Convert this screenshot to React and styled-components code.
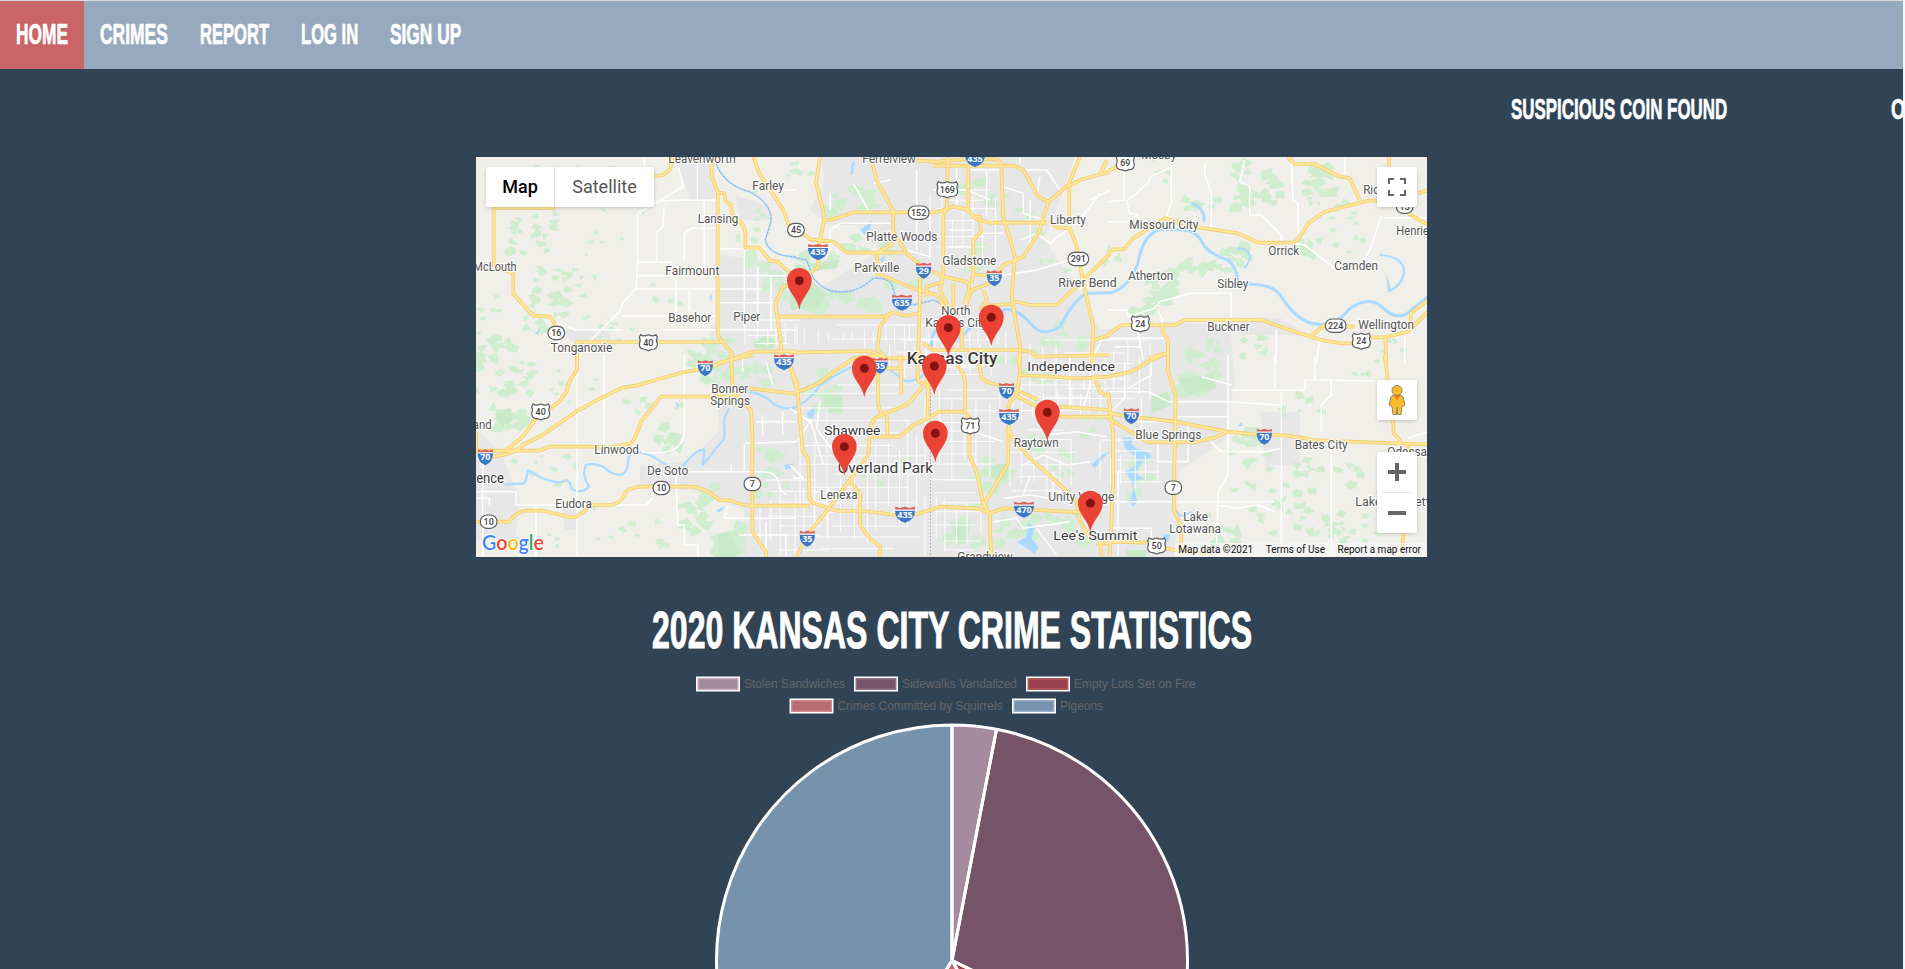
import React, { useLayoutEffect, useRef, useState } from "react";
import styled, { createGlobalStyle } from "styled-components";

const GlobalStyle = createGlobalStyle`
  * { box-sizing: border-box; }
  html, body { margin: 0; padding: 0; height: 969px; overflow: hidden; background: #f4f6f8; }
`;

const Page = styled.div`
  width: 1903px;
  height: 969px;
  overflow: hidden;
  background: #314455;
  border-top: 1px solid #d6d9dd;
  display: flex;
  flex-direction: column;
  align-items: center;
  font-family: "Liberation Sans", Arial, sans-serif;
`;

const Nav = styled.nav`
  width: 100%;
  height: 68px;
  flex: none;
  display: flex;
  background: #97a9be;
`;

const NavLink = styled.a`
  height: 68px;
  padding: 0 16px 3px;
  display: flex;
  align-items: center;
  background: ${(p) => (p.$active ? "#c96567" : "transparent")};
`;

const FitBox = styled.span`
  display: block;
  width: ${(p) => p.$width}px;
  height: ${(p) => p.$size}px;
  flex: none;
  color: #fff;
  font-weight: 700;
  font-size: ${(p) => p.$size}px;
  line-height: ${(p) => p.$size}px;
  white-space: nowrap;
  -webkit-text-stroke: ${(p) => p.$stroke}px #fff;
`;

const FitInner = styled.span`
  display: inline-block;
  transform-origin: 0 50%;
`;

const Ticker = styled.div`
  width: 100%;
  height: 87px;
  flex: none;
  display: flex;
  gap: 164px;
  padding: 25px 0 0 1511px;
  overflow: hidden;
`;

const MapFrame = styled.section`
  position: relative;
  width: 951px;
  height: 400px;
  flex: none;
  margin-top: 1px;
  overflow: hidden;
  background: #f0efea;
  font-family: Roboto, Arial, sans-serif;
`;

const MapSvg = styled.svg`
  display: block;
  width: 951px;
  height: 400px;
`;

const Control = styled.div`
  position: absolute;
  display: flex;
  align-items: center;
  justify-content: center;
  background: #fff;
  border-radius: 2px;
  box-shadow: 0 1px 4px -1px rgba(0, 0, 0, 0.3);
`;

const TypeControl = styled(Control)`
  left: 10px;
  top: 10px;
  width: 168px;
  height: 40px;
`;

const TypeButton = styled.div`
  width: ${(p) => p.$width}px;
  height: 40px;
  text-align: center;
  line-height: 39px;
  font-size: 18px;
  font-weight: ${(p) => (p.$active ? 500 : 400)};
  color: ${(p) => (p.$active ? "#000" : "#565656")};
  border-left: ${(p) => (p.$active ? "none" : "1px solid #e6e6e6")};
`;

const SideControl = styled(Control)`
  left: 901px;
  top: ${(p) => p.$top}px;
  width: 40px;
  height: ${(p) => p.$height}px;
`;

const Attribution = styled.div`
  position: absolute;
  right: 0;
  bottom: 0;
  height: 14px;
  display: flex;
  gap: 12.6px;
  padding: 0 6px 0 3px;
  background: rgba(245, 245, 245, 0.75);
  font-size: 10px;
  line-height: 14px;
  color: #111;
  white-space: nowrap;
`;

const Title = styled.h1`
  margin: 48px 0 0;
  height: 50px;
  flex: none;
`;

const Chart = styled.svg`
  display: block;
  width: 520px;
  height: 304px;
  flex: none;
  margin-top: 13px;
`;

function FitText({ width, size, stroke = 0.7, children }) {
  const ref = useRef(null);
  const [scale, setScale] = useState(0.6);
  useLayoutEffect(() => {
    setScale(width / ref.current.offsetWidth);
  }, [width, children]);
  return (
    <FitBox $width={width} $size={size} $stroke={stroke}>
      <FitInner ref={ref} style={{ transform: `scaleX(${scale})` }}>{children}</FitInner>
    </FitBox>
  );
}

const navItems = [
  ["HOME", 52],
  ["CRIMES", 68],
  ["REPORT", 69],
  ["LOG IN", 57],
  ["SIGN UP", 71],
];

/* Map data: six tiles, drawn in units of a third of a pixel. */
const tiles = [
  {
    x: 476, y: 150,
    green: [[170, 250, 70, 60, 22, 18], [340, 90, 180, 50, 14, 12], [270, 400, 90, 50, 18, 18], [230, 480, 100, 60, 20, 20], [50, 600, 60, 40, 10, 26], [420, 230, 110, 90, 10, 12], [420, 560, 60, 50, 8, 14], [700, 610, 60, 40, 14, 22], [830, 210, 70, 90, 10, 14], [560, 430, 60, 30, 5, 14], [850, 340, 50, 30, 6, 28], [20, 440, 50, 110, 8, 14], [905, 390, 40, 60, 5, 26]],
    park: ["M830 580Q840 560 875 558Q905 570 898 590Q870 602 840 595Z"],
    lake: ["M163 535L180 548L196 530L185 556Z", "M700 440L708 432L706 456Z"],
    river: ["M720 40Q745 105 820 125Q890 160 885 215L868 270Q880 320 960 320"],
    minor: "M664 21V150M534 155Q560 150 720 150M485 190V335L480 415L440 460L430 485L345 570M485 190L622 110L600 21M565 170L560 230L543 245V335M481 337H590M481 377H930M480 417H860M440 498H720M725 296H870M685 150V370M625 335V250L645 235H720M805 300V540M845 350V540M600 380V500M885 380V540M730 458H900M640 420V500M240 520L300 540H440M560 540H960M505 21V50M920 120H960",
    road: "M243 174H53V345L112 372V432L172 497L220 500Q236 510 240 545V570M303 630V576H747M725 130V540Q724 560 740 575L768 610V640M707 21V80L726 128L745 130L748 152L764 165L768 190L803 228L808 250V293H850L882 332L905 335L945 372M535 78L560 76L582 60L590 21M832 21L850 70L922 180L942 235M960 395L920 412L898 460L905 510L918 610L915 640M905 500H960M700 652L830 605L960 604",
    labels: [["Leavenworth", 577, 779, 39], ["Farley", 829, 924, 121], ["Lansing", 665, 787, 218], ["McLouth", -8, 122, 364], ["Fairmount", 568, 730, 376], ["Basehor", 577, 706, 517], ["Piper", 772, 853, 514], ["Tonganoxie", 224, 409, 607]],
    oval: [["16", 241, 549]], us: [["40", 517, 577]], inter: [], pins: [],
  },
  {
    x: 790, y: 150,
    green: [[190, 150, 70, 40, 10, 30], [240, 290, 70, 30, 8, 24], [90, 330, 60, 30, 8, 28], [180, 460, 130, 30, 14, 32], [30, 60, 40, 50, 7, 14], [530, 110, 50, 20, 5, 26], [640, 190, 50, 60, 7, 22], [570, 330, 40, 40, 5, 22], [850, 560, 70, 40, 8, 24], [790, 330, 60, 60, 5, 14], [730, 260, 20, 60, 4, 28], [330, 400, 50, 20, 4, 24], [750, 590, 40, 20, 4, 20]],
    park: ["M50 340L150 330L140 355L80 362Z", "M0 390L50 380L110 430L90 470L0 480Z"],
    lake: ["M212 240L230 225L246 210L240 235L222 255Z", "M185 40L195 30L190 70L180 74Z", "M268 330L285 318L280 336Z"],
    river: ["M0 320L50 330L70 385Q110 430 150 425Q200 430 250 385Q305 380 310 420Q315 455 370 465L430 450L470 470"],
    wide: ["M425 590Q420 550 450 530M500 575Q550 520 600 490L650 478Q690 480 730 530Q760 560 810 530Q850 450 890 430L960 428"],
    minor: "M120 300V240L150 220H300M380 60V300M420 180V320L350 300M500 50V170M590 60V200M430 120H530L600 150M540 60H630M640 110L700 130V190L760 210M750 80L740 140M690 270L740 250L780 280L830 240M610 380L740 360L840 330M690 40V20M480 240H550M475 290H550M120 130V180M190 100L240 190M300 90L250 100M720 150V300M810 120L770 60H700M930 130L870 210M960 120L900 150M940 560L910 620M640 250H580",
    road: "M90 21L78 100L100 185L103 210L85 290M103 212Q130 210 190 187H440L490 170L530 178L560 208L600 218H770M20 235L60 268L130 275L170 308H340M380 32L440 35L520 28H620Q635 32 634 60L640 200L675 320L665 440L690 590V640M430 47H670L700 60L745 140L775 155M247 40L260 90L310 185V245L350 310L390 345L460 380L530 395Q545 410 530 440L520 480M473 21V60L470 170L460 200V370L450 420L480 480M535 50V190M540 200H570L573 245L550 270V370L545 400M870 21L835 105L775 155L745 250L700 320L640 345L600 400L545 420L530 460L525 480M960 65L870 90L835 110M950 30L930 75M838 110V210M780 215L800 232L840 235L860 290L880 400L910 530L905 640M960 310L880 390L800 465H720L680 455L665 462L590 467M310 280L260 310L262 370L370 415L440 435L465 475M0 500H280L310 487L350 498L385 490M300 490L270 530L262 600L290 625M390 380V440L385 600L400 625M0 608L240 603L290 625H400M400 580L430 600H690L720 605L740 620L960 615M910 570L960 555M85 290V350L60 368M410 440V410L460 395M490 400V470M580 420L590 450L570 480M515 530V600M550 375H610",
    labels: [["Ferrelview", 217, 378, 38], ["Platte Woods", 229, 442, 272], ["Parkville", 193, 328, 367], ["Gladstone", 457, 619, 344], ["Liberty", 780, 888, 223], ["North", 454, 541, 496], ["Kansas City", 406, 592, 532], ["River Bend", 805, 980, 412], ["Kansas City", 350, 622, 641, 48, 500]],
    oval: [["152", 386, 188], ["45", 18, 240], ["291", 865, 327]], us: [["169", 472, 118]],
    inter: [["435", 84, 304], ["29", 401, 360], ["35", 613, 383], ["635", 336, 456], ["435", 555, 25]],
    pins: [[28, 392], [475, 533], [604, 502]],
  },
  {
    x: 1108, y: 150,
    green: [[450, 110, 70, 70, 20, 28], [620, 90, 50, 50, 12, 28], [660, 150, 60, 40, 8, 20], [380, 320, 40, 30, 12, 26], [270, 350, 90, 25, 14, 24], [160, 430, 50, 50, 14, 30], [270, 160, 60, 20, 10, 20], [100, 500, 50, 30, 6, 22], [610, 290, 40, 30, 6, 24], [730, 240, 60, 70, 9, 14], [320, 600, 50, 30, 8, 16], [450, 590, 50, 30, 6, 18], [170, 60, 40, 50, 5, 14], [840, 590, 60, 20, 5, 14], [20, 320, 40, 20, 4, 26], [390, 80, 20, 50, 5, 20]],
    park: [], lake: ["M835 370L845 405L850 425L840 422Z"],
    river: [],
    wide: ["M0 430Q60 420 90 340Q105 250 160 238L230 240Q270 245 290 290Q320 320 360 330Q385 350 390 395L430 403Q500 405 520 440Q570 520 630 523Q690 525 720 480Q780 435 820 470Q870 520 910 480L960 440", "M250 160Q290 170 288 215"],
    thin: ["M400 295Q445 310 410 355M390 298L400 294", "M815 315Q890 320 888 370Q880 410 840 425"],
    minor: "M48 60V150L0 155M55 150L65 190L90 195L60 215L0 215M60 150L120 100L130 80L190 50V160L175 200M290 40V70L310 130V240M410 30L395 95L425 110V195H460L520 255V275M550 30L555 150L570 160V250M560 280L590 285L680 355M820 200L785 300L770 330M830 203H960M710 21V90M0 480H55L60 500L140 475L155 455L250 430H370V515M505 540V640M640 540L625 640M890 560V640M150 480L165 515M0 565H170M90 540L105 630M20 590H100",
    road: "M0 310L15 298H48L75 265L170 205L270 232L390 250L450 278H555Q570 275 600 220L650 185L780 152H810M540 21L560 42H620L690 78L725 85L755 150M843 21V55M900 190L960 225M930 130L960 120M0 62L45 45M0 555L40 525H200L230 510H460L560 545L640 570L700 580H740M740 530H700L650 525L610 557M790 562H830L900 545L960 485M908 520V490L960 450M832 560L835 640M162 520L165 545L180 570V640M180 608L120 625",
    labels: [["Mosby", 100, 205, 28], ["Missouri City", 64, 271, 238], ["Orrick", 481, 574, 316], ["Camden", 679, 810, 361], ["Atherton", 61, 196, 391], ["Sibley", 328, 421, 415], ["Buckner", 298, 425, 544], ["Wellington", 751, 918, 538], ["Richmond", 766, 920, 133], ["Henrietta", 865, 1003, 256]],
    oval: [["224", 683, 527], ["13", 890, 170]], us: [["69", 52, 38], ["24", 97, 521], ["24", 760, 573]], inter: [], pins: [],
  },
  {
    x: 476, y: 355,
    green: [[80, 60, 90, 60, 22, 22], [90, 190, 60, 40, 8, 26], [320, 100, 120, 60, 8, 12], [200, 340, 110, 50, 9, 16], [540, 250, 70, 40, 12, 24], [520, 160, 100, 30, 6, 18], [650, 470, 40, 60, 14, 26], [760, 540, 40, 50, 12, 32], [420, 500, 70, 60, 8, 14], [560, 530, 30, 50, 5, 18], [880, 320, 50, 40, 8, 30], [740, 60, 60, 50, 10, 28], [860, 60, 60, 30, 6, 26], [200, 560, 80, 30, 5, 12], [870, 400, 60, 20, 5, 24], [690, 420, 30, 30, 5, 22]],
    park: ["M60 165L105 160L110 200L80 212L58 195Z", "M725 535L760 530L790 590L780 605H730Z"],
    lake: ["M598 140L604 160L610 150Z", "M925 330L955 325L945 340L930 345Z", "M720 468L740 455L745 460L728 472Z"],
    river: [],
    thin: ["M85 388L145 385Q155 360 155 345L200 370Q250 390 270 375Q285 380 285 400Q310 420 340 395Q315 360 330 330Q370 320 400 350Q450 375 455 330Q455 300 470 290Q520 290 570 330", "M620 335Q660 280 685 285L680 330Q720 280 745 250L745 190L760 160", "M820 110Q870 120 890 145Q920 165 960 160"],
    minor: "M303 45V605M20 320V605M0 410H120V450H510L530 430M384 0V280M180 450V605M495 290Q620 310 625 230V50M640 350H860Q910 350 910 400L930 420M600 360L605 510H625V570H665V605M0 430H40V450M860 180V240M920 170V240M805 265L960 260M805 270V345M745 490H960M745 490L755 455M790 540H930V605M870 500V590M765 325V350M960 200H840M625 0V50M870 20L890 90M800 50V0",
    road: "M0 287H90L140 245L180 190L250 140L272 110Q275 80 303 45V0M20 305H50Q110 300 140 270L200 240L300 170Q370 130 440 98L480 92L620 52L680 42L740 20L830 0M90 287H190L220 275H350L400 277L465 265Q480 250 495 200L555 125H790M0 500H100Q120 470 150 467H200L290 488Q320 480 340 450H410Q440 440 450 410Q470 393 510 395H650Q690 400 730 435L765 437Q800 452 830 452H960M765 0L770 110L825 165L829 230V530L870 590V605M820 100L960 117M940 20L960 100M0 230V290",
    labels: [["Bonner", 706, 817, 115], ["Springs", 703, 822, 150], ["Linwood", 355, 489, 298], ["De Soto", 513, 637, 361], ["Eudora", 238, 348, 460], ["Lawrence", -84, 84, 385, 42], ["Midland", -75, 47, 223]],
    oval: [["10", 556, 399], ["10", 38, 500], ["7", 829, 387]], us: [["40", 194, 170]],
    inter: [["70", 688, 38], ["435", 924, 20], ["70", 28, 305]], pins: [],
  },
  {
    x: 790, y: 355,
    green: [[130, 140, 50, 35, 8, 30], [610, 340, 50, 30, 8, 30], [790, 310, 60, 60, 9, 20], [740, 60, 50, 25, 5, 26], [520, 540, 50, 40, 9, 28], [680, 540, 60, 50, 9, 30], [830, 520, 60, 50, 8, 28], [280, 360, 80, 60, 5, 18], [580, 420, 40, 40, 5, 28], [90, 90, 70, 40, 6, 24], [720, 250, 60, 40, 6, 22], [620, 20, 60, 20, 5, 26], [900, 220, 50, 30, 4, 22]],
    park: ["M100 130L155 120L160 170L110 175Z", "M600 330L660 325L650 375L605 370Z", "M480 500L540 505L530 570L500 560Z"],
    lake: ["M50 175L75 155L72 180L60 200Z", "M715 505L735 515L725 550L745 575L735 598L705 575L680 562L708 545Z", "M905 330L935 300L958 290L930 320L915 340Z", "M30 578L50 575L40 595Z"],
    river: [],
    thin: ["M0 160Q50 150 90 90Q150 50 200 30M260 30Q300 40 345 78Q385 80 410 50"],
    minor: "M90 140L80 220L130 290M0 160L60 200L20 260M60 190L100 330M700 330L760 300L830 330L900 320M640 430L720 420L840 440M610 500L680 490L700 520L840 500M740 520L800 600M900 90L880 160M770 240L860 230L950 245M720 360L700 420M790 350V440M840 0V150M550 230L640 260M900 0V100M0 330L40 370H10",
    road: "M0 115Q80 100 130 50L190 10L270 0M0 30L20 80L38 290L55 310L58 430Q70 450 90 450L140 468H220L320 480L390 475L450 455L560 460L600 475L640 460L870 472M0 452H60M20 605L60 530L120 455L235 300L240 220Q245 190 275 180L350 150Q370 130 405 85L430 60M262 20L265 150L275 180M290 180L292 240M235 245H330L370 210L415 190L445 170H520M185 365V385L210 415V510L240 550L270 575V605M500 30Q530 60 525 100V170L538 190V300L560 350L578 440L600 480V530L605 605M578 455L655 325V215M655 160L660 140L680 120L690 50L685 0M565 20L575 70L590 80L680 105L745 135M665 115L740 155L820 185H960M810 155L960 165M685 60L870 70L960 65M655 210L665 245L720 310L800 380L860 440L870 500L900 550M910 60L930 110L960 130M415 80L412 190M330 0L335 120M380 0L385 80L410 90M920 565H960M930 560L935 605M290 40H340",
    labels: [["Independence", 712, 975, 48, 40], ["Shawnee", 103, 271, 239, 40], ["Overland Park", 143, 429, 354, 43], ["Raytown", 671, 806, 277], ["Lenexa", 91, 203, 433], ["Unity Village", 775, 973, 439], ["Lee's Summit", 790, 1042, 555, 40], ["Grandview", 502, 668, 618]],
    oval: [], us: [["71", 541, 212]],
    inter: [["35", 270, 30], ["70", 650, 106], ["435", 657, 184], ["435", 345, 477], ["35", 52, 549], ["470", 702, 462]],
    pins: [[223, 40], [433, 33], [163, 275], [436, 235], [772, 172], [901, 445]],
  },
  {
    x: 1108, y: 355,
    green: [[270, 90, 50, 30, 10, 34], [90, 380, 40, 70, 10, 30], [580, 150, 60, 30, 7, 20], [450, 350, 90, 60, 12, 18], [600, 360, 40, 50, 8, 20], [520, 470, 100, 70, 16, 20], [350, 520, 50, 40, 9, 24], [730, 350, 50, 40, 6, 20], [740, 510, 90, 50, 14, 18], [410, 250, 50, 20, 6, 28], [300, 20, 40, 20, 6, 18], [660, 540, 60, 40, 6, 16], [790, 40, 60, 20, 5, 14], [240, 10, 40, 30, 4, 24]],
    park: ["M130 125L180 110L190 150L130 175Z", "M210 70L315 60L325 100L240 120Z", "M55 585H115V605H55Z"],
    lake: ["M45 245L75 250L70 268L85 280L125 295L130 308L105 318L80 355L112 372L84 375L76 395L88 440L75 455L66 440L75 400L68 375L52 350L78 335L88 310L50 278Z", "M200 460L220 480L260 465L240 480L215 486Z", "M165 540L188 535L180 560L170 560Z", "M388 215L400 200L404 212Z"],
    river: [],
    minor: "M360 0V360L330 410L325 600M500 0V105H590V75H670V120L640 150V230M370 105H500M520 110V605M280 65L370 90M0 110H120L180 140H360L515 150M210 185H360M670 290V605M325 450L390 460L450 450L500 470M0 440H500M310 262L340 290H470L520 280M240 320H150V250M130 0V60L60 100M620 0V75M660 75L800 78M900 250L960 230M0 520H130V600M50 20V130L0 180M100 130V220M90 200H200M30 350V600M240 200V320",
    road: "M0 65L70 50L130 15L165 0M180 0V50L190 80L203 120L197 460L220 520V605M0 175L70 185L200 200L360 230L440 238L540 242L620 255L720 260L960 268M0 190L60 225L120 262H260L320 248L360 230M0 110L15 230V400L5 605M830 0L840 80M855 190L857 235L875 255V270M887 530L880 605M0 560L120 563L170 580L220 588H250M900 270V290M250 590L320 605",
    labels: [["Blue Springs", 82, 280, 253], ["Bates City", 560, 719, 283], ["Lake", 226, 300, 499], ["Lotawana", 184, 339, 534], ["Odessa", 838, 957, 303], ["Lake Lafayette", 742, 985, 454]],
    oval: [["7", 196, 398]], us: [["50", 146, 572]],
    inter: [["70", 70, 182], ["70", 469, 243]], pins: [],
  },
];

function makeRandom(seed) {
  let s = seed;
  return () => {
    s = (s * 16807) % 2147483647;
    return s / 2147483647;
  };
}

function scatter(clusters, seed) {
  const rnd = makeRandom(seed);
  let d = "";
  clusters.forEach(([cx, cy, rx, ry, n, size]) => {
    for (let i = 0; i < n; i += 1) {
      const x = cx + (rnd() * 2 - 1) * rx;
      const y = cy + (rnd() * 2 - 1) * ry;
      const corners = 3 + Math.floor(rnd() * 3);
      const turn = rnd() * 6.28;
      for (let k = 0; k < corners; k += 1) {
        const a = turn + (k / corners) * 6.28;
        const r = size * (0.4 + rnd() * 0.75);
        d += `${k ? "L" : "M"}${(x + Math.cos(a) * r).toFixed(1)} ${(y + Math.sin(a) * r * 0.75).toFixed(1)}`;
      }
      d += "Z";
    }
  });
  return d;
}

function streets() {
  const rnd = makeRandom(77);
  const zones = [[795, 325, 1010, 345], [800, 385, 925, 555], [925, 365, 1000, 480], [1000, 385, 1110, 420], [865, 325, 1010, 380], [1030, 340, 1160, 400], [925, 480, 990, 555], [745, 320, 800, 350], [1010, 430, 1080, 500], [1100, 440, 1165, 490], [930, 190, 1000, 270], [760, 480, 830, 555]];
  let d = "";
  zones.forEach(([x0, y0, x1, y1]) => {
    for (let x = x0; x < x1; x += 8 + rnd() * 7) {
      const a = y0 + rnd() * (y1 - y0) * 0.4;
      d += `M${x.toFixed(1)} ${a.toFixed(1)}V${(y1 - rnd() * (y1 - y0) * 0.3).toFixed(1)}`;
    }
    for (let y = y0; y < y1; y += 8 + rnd() * 8) {
      const a = x0 + rnd() * (x1 - x0) * 0.3;
      d += `M${a.toFixed(1)} ${y.toFixed(1)}H${(x1 - rnd() * (x1 - x0) * 0.3).toFixed(1)}`;
    }
  });
  return d;
}

const urban = "M820 157H1075L1060 200L1045 240L1085 300L1100 330L1165 322L1230 325L1235 380L1225 440L1180 470L1175 557H735L745 510L690 490L670 480L720 430L715 380L705 350L715 320L718 255L780 262L800 300L880 250L855 225L830 225L810 210L825 180ZM676 157H715V200H690ZM735 195L770 207V220H740ZM560 330H610V350H580ZM476 430L500 450L520 500L515 540H476ZM560 500H578V530H565ZM640 465L700 460L690 490L640 488ZM1220 317L1280 318L1310 335H1240ZM1260 412H1300V465H1265ZM1285 415H1300V430H1285Z";

function Layer({ render }) {
  return tiles.map((t, i) => (
    <g key={i} transform={`translate(${t.x} ${t.y}) scale(0.33333)`}>{render(t, i)}</g>
  ));
}

function Oval({ data: [n, x, y] }) {
  const w = n.length > 2 ? 62 : 50;
  return (
    <g>
      <rect x={x - w / 2} y={y - 20} width={w} height="40" rx="20" fill="#fff" stroke="#5b5d60" strokeWidth="3.5" />
      <text x={x} y={y + 9} textAnchor="middle" fontSize="27" fontWeight="500" fill="#444">{n}</text>
    </g>
  );
}

function UsShield({ data: [n, x, y] }) {
  const w = n.length > 2 ? 31 : 27;
  return (
    <g>
      <path
        transform={`translate(${x} ${y})`}
        d={`M${-w + 4} -23Q${-w / 2} -16 0 -23Q${w / 2} -16 ${w - 4} -23L${w} -15Q${w - 5} -6 ${w} 4Q${w} 18 ${w - 10} 20Q8 20 0 25Q-8 20 ${-w + 10} 20Q${-w} 18 ${-w} 4Q${-w + 5} -6 ${-w} -15Z`}
        fill="#fff" stroke="#5b5d60" strokeWidth="3.5"
      />
      <text x={x} y={y + 10} textAnchor="middle" fontSize="27" fontWeight="500" fill="#444">{n}</text>
    </g>
  );
}

function Interstate({ data: [n, x, y] }) {
  const w = n.length > 2 ? 30 : 23;
  return (
    <g>
      <g transform={`translate(${x} ${y})`}>
        <path d={`M${-w} -10H${w}Q${w} 17 0 26Q${-w} 17 ${-w} -10Z`} fill="#3a77c8" />
        <path d={`M${-w + 1} -22L${-w / 2} -18L0 -22L${w / 2} -18L${w - 1} -22L${w} -13H${-w}Z`} fill="#d8605d" />
        <path d={`M${-w} -12H${w}`} stroke="#fff" strokeWidth="2" />
      </g>
      <text x={x} y={y + 11} textAnchor="middle" fontFamily="'Open Sans', 'Noto Sans', sans-serif" fontSize="27" fontWeight="700" fill="#fff">{n}</text>
    </g>
  );
}

function CityMap() {
  return (
    <MapSvg viewBox="476 157 951 400">
      <rect x="476" y="157" width="951" height="400" fill="#f0efea" />
      <path d={urban} fill="#e7e7e7" />
      <Layer render={(t, i) => (
        <>
          <path d={scatter(t.green, 91 + i * 53)} fill="#d0edd0" />
          <path d={t.park.join("")} fill="#c8eac8" />
          <path d={t.lake.join("")} fill="#aadaff" />
          <path d={(t.wide || []).join("")} fill="none" stroke="#aadaff" strokeWidth="9" strokeLinejoin="round" />
          <path d={(t.thin || []).join("")} fill="none" stroke="#aadaff" strokeWidth="6.5" strokeLinejoin="round" />
          <path d={t.river.join("")} fill="none" stroke="#aadaff" strokeWidth="5" strokeLinejoin="round" />
          <path d={t.river.join("")} fill="none" stroke="#86a9c8" strokeWidth="2.5" strokeDasharray="7 4" />
        </>
      )} />
      <path d={streets()} fill="none" stroke="#fff" strokeWidth="0.9" />
      <path d="M930.5 382V557" stroke="#aaa" strokeWidth="1" strokeDasharray="1.5 2" />
      <Layer render={(t) => <path d={t.minor} fill="none" stroke="#fff" strokeWidth="4.5" strokeLinejoin="round" />} />
      <Layer render={(t) => <path d={t.road} fill="none" stroke="#f6ce6c" strokeWidth="11" strokeLinejoin="round" />} />
      <Layer render={(t) => <path d={t.road} fill="none" stroke="#ffe698" strokeWidth="6" strokeLinejoin="round" />} />
      <Layer render={(t) => (
        <>
          {t.labels.map(([s, a, b, y, size = 36, weight = 400], k) => (
            <text
              key={k} x={a} y={y} textLength={b - a} lengthAdjust="spacingAndGlyphs"
              fontSize={size} fontWeight={weight} fill={size > 36 ? "#3a3a3a" : "#555"}
              stroke="#fff" strokeWidth="7" strokeLinejoin="round" strokeOpacity="0.85" paintOrder="stroke"
            >{s}</text>
          ))}
          {t.oval.map((s, k) => <Oval key={k} data={s} />)}
          {t.us.map((s, k) => <UsShield key={k} data={s} />)}
          {t.inter.map((s, k) => <Interstate key={k} data={s} />)}
        </>
      )} />
      <Layer render={(t) => t.pins.map(([x, y], k) => (
        <g key={k} transform={`translate(${x} ${y})`}>
          <path d="M0 87C-6 48 -37 34 -37 -1A37 37 0 0 1 37 -1C37 34 6 48 0 87Z" fill="#ea4335" />
          <circle r="13.5" fill="#811411" />
        </g>
      ))} />
      <text x="482" y="550" textLength="62" lengthAdjust="spacingAndGlyphs" fontFamily="Lato, sans-serif" fontSize="21" fontWeight="600" stroke="#fff" strokeWidth="2" paintOrder="stroke">
        <tspan fill="#4285f4">G</tspan><tspan fill="#ea4335">o</tspan><tspan fill="#fbbc05">o</tspan><tspan fill="#4285f4">g</tspan><tspan fill="#34a853">l</tspan><tspan fill="#ea4335">e</tspan>
      </text>
    </MapSvg>
  );
}

const slices = [
  { label: "Stolen Sandwiches", color: "rgb(185,152,173)", from: 0, to: 10.9, bx: 697.5, by: 679, tw: 101 },
  { label: "Sidewalks Vandalized", color: "rgb(129,87,111)", from: 10.9, to: 116, bx: 855.5, by: 679, tw: 115 },
  { label: "Empty Lots Set on Fire", color: "rgb(173,63,77)", from: 116, to: 150, bx: 1027.5, by: 679, tw: 121.5 },
  { label: "Crimes Committed by Squirrels", color: "rgb(207,115,117)", from: 150, to: 212, bx: 791, by: 701, tw: 165 },
  { label: "Pigeons", color: "rgb(132,160,189)", from: 212, to: 360, bx: 1013.5, by: 701, tw: 43 },
];

const CX = 952;
const CY = 961.5;
const R = 235.5;

function wedge(from, to) {
  const pt = (deg) => {
    const a = (deg * Math.PI) / 180;
    return `${CX + R * Math.sin(a)} ${CY - R * Math.cos(a)}`;
  };
  return `M${CX} ${CY}L${pt(from)}A${R} ${R} 0 ${to - from > 180 ? 1 : 0} 1 ${pt(to)}Z`;
}

function CrimeChart() {
  return (
    <Chart viewBox="692 669 520 304">
      {slices.map((s) => (
        <g key={s.label}>
          <rect x={s.bx} y={s.by} width="41" height="12" fill="none" stroke="#fff" strokeWidth="3" />
          <rect x={s.bx} y={s.by} width="41" height="12" fill={s.color} fillOpacity="0.85" />
          <text x={s.bx + 46.5} y={s.by + 9.5} fontSize="12" fill="#666" textLength={s.tw} lengthAdjust="spacingAndGlyphs">{s.label}</text>
        </g>
      ))}
      {slices.map((s) => (
        <path key={s.label} d={wedge(s.from, s.to)} fill={s.color} fillOpacity="0.85" />
      ))}
      {slices.map((s) => (
        <path key={s.label} d={wedge(s.from, s.to)} fill="none" stroke="#fff" strokeWidth="3" strokeLinejoin="bevel" />
      ))}
    </Chart>
  );
}

export default function App() {
  return (
    <>
      <GlobalStyle />
      <Page>
        <Nav>
          {navItems.map(([label, width], i) => (
            <NavLink key={label} $active={i === 0}>
              <FitText width={width} size={30}>{label}</FitText>
            </NavLink>
          ))}
        </Nav>
        <Ticker>
          <FitText width={216} size={30}>SUSPICIOUS COIN FOUND</FitText>
          <FitText width={14} size={30}>O</FitText>
        </Ticker>
        <MapFrame>
          <CityMap />
          <TypeControl>
            <TypeButton $active $width={68}>Map</TypeButton>
            <TypeButton $width={100}>Satellite</TypeButton>
          </TypeControl>
          <SideControl $top={10} $height={40}>
            <svg width="18" height="18" viewBox="0 0 18 18" fill="#666">
              <path d="M0 0V6H2V2H6V0ZM16 0H12V2H16V6H18V0ZM16 16H12V18H18V12H16ZM2 12H0V18H6V16H2Z" />
            </svg>
          </SideControl>
          <SideControl $top={223} $height={40}>
            <svg width="18" height="32" viewBox="0 0 18 32">
              <path d="M5 11L3 13L1 21L4 22.5L5 30.5H8.4L9 23L9.6 30.5H13L14 22.5L17 21L15 13L13 11Z" fill="#fbbc2c" stroke="#857a61" strokeWidth="0.9" />
              <path d="M5.5 11H12.5L9 16Z" fill="#e5762f" />
              <circle cx="9" cy="6.4" r="5" fill="#fbbc2c" stroke="#857a61" strokeWidth="0.9" />
            </svg>
          </SideControl>
          <SideControl $top={295} $height={81}>
            <svg width="40" height="81" viewBox="0 0 40 81">
              <path d="M18 11H22V18H29V22H22V29H18V22H11V18H18ZM11 59H29V63H11Z" fill="#666" />
              <path d="M5 40.5H35" stroke="#e6e6e6" />
            </svg>
          </SideControl>
          <Attribution>
            <span>Map data ©2021</span>
            <span>Terms of Use</span>
            <span>Report a map error</span>
          </Attribution>
        </MapFrame>
        <Title>
          <FitText width={600} size={51} stroke={1}>2020 KANSAS CITY CRIME STATISTICS</FitText>
        </Title>
        <CrimeChart />
      </Page>
    </>
  );
}
